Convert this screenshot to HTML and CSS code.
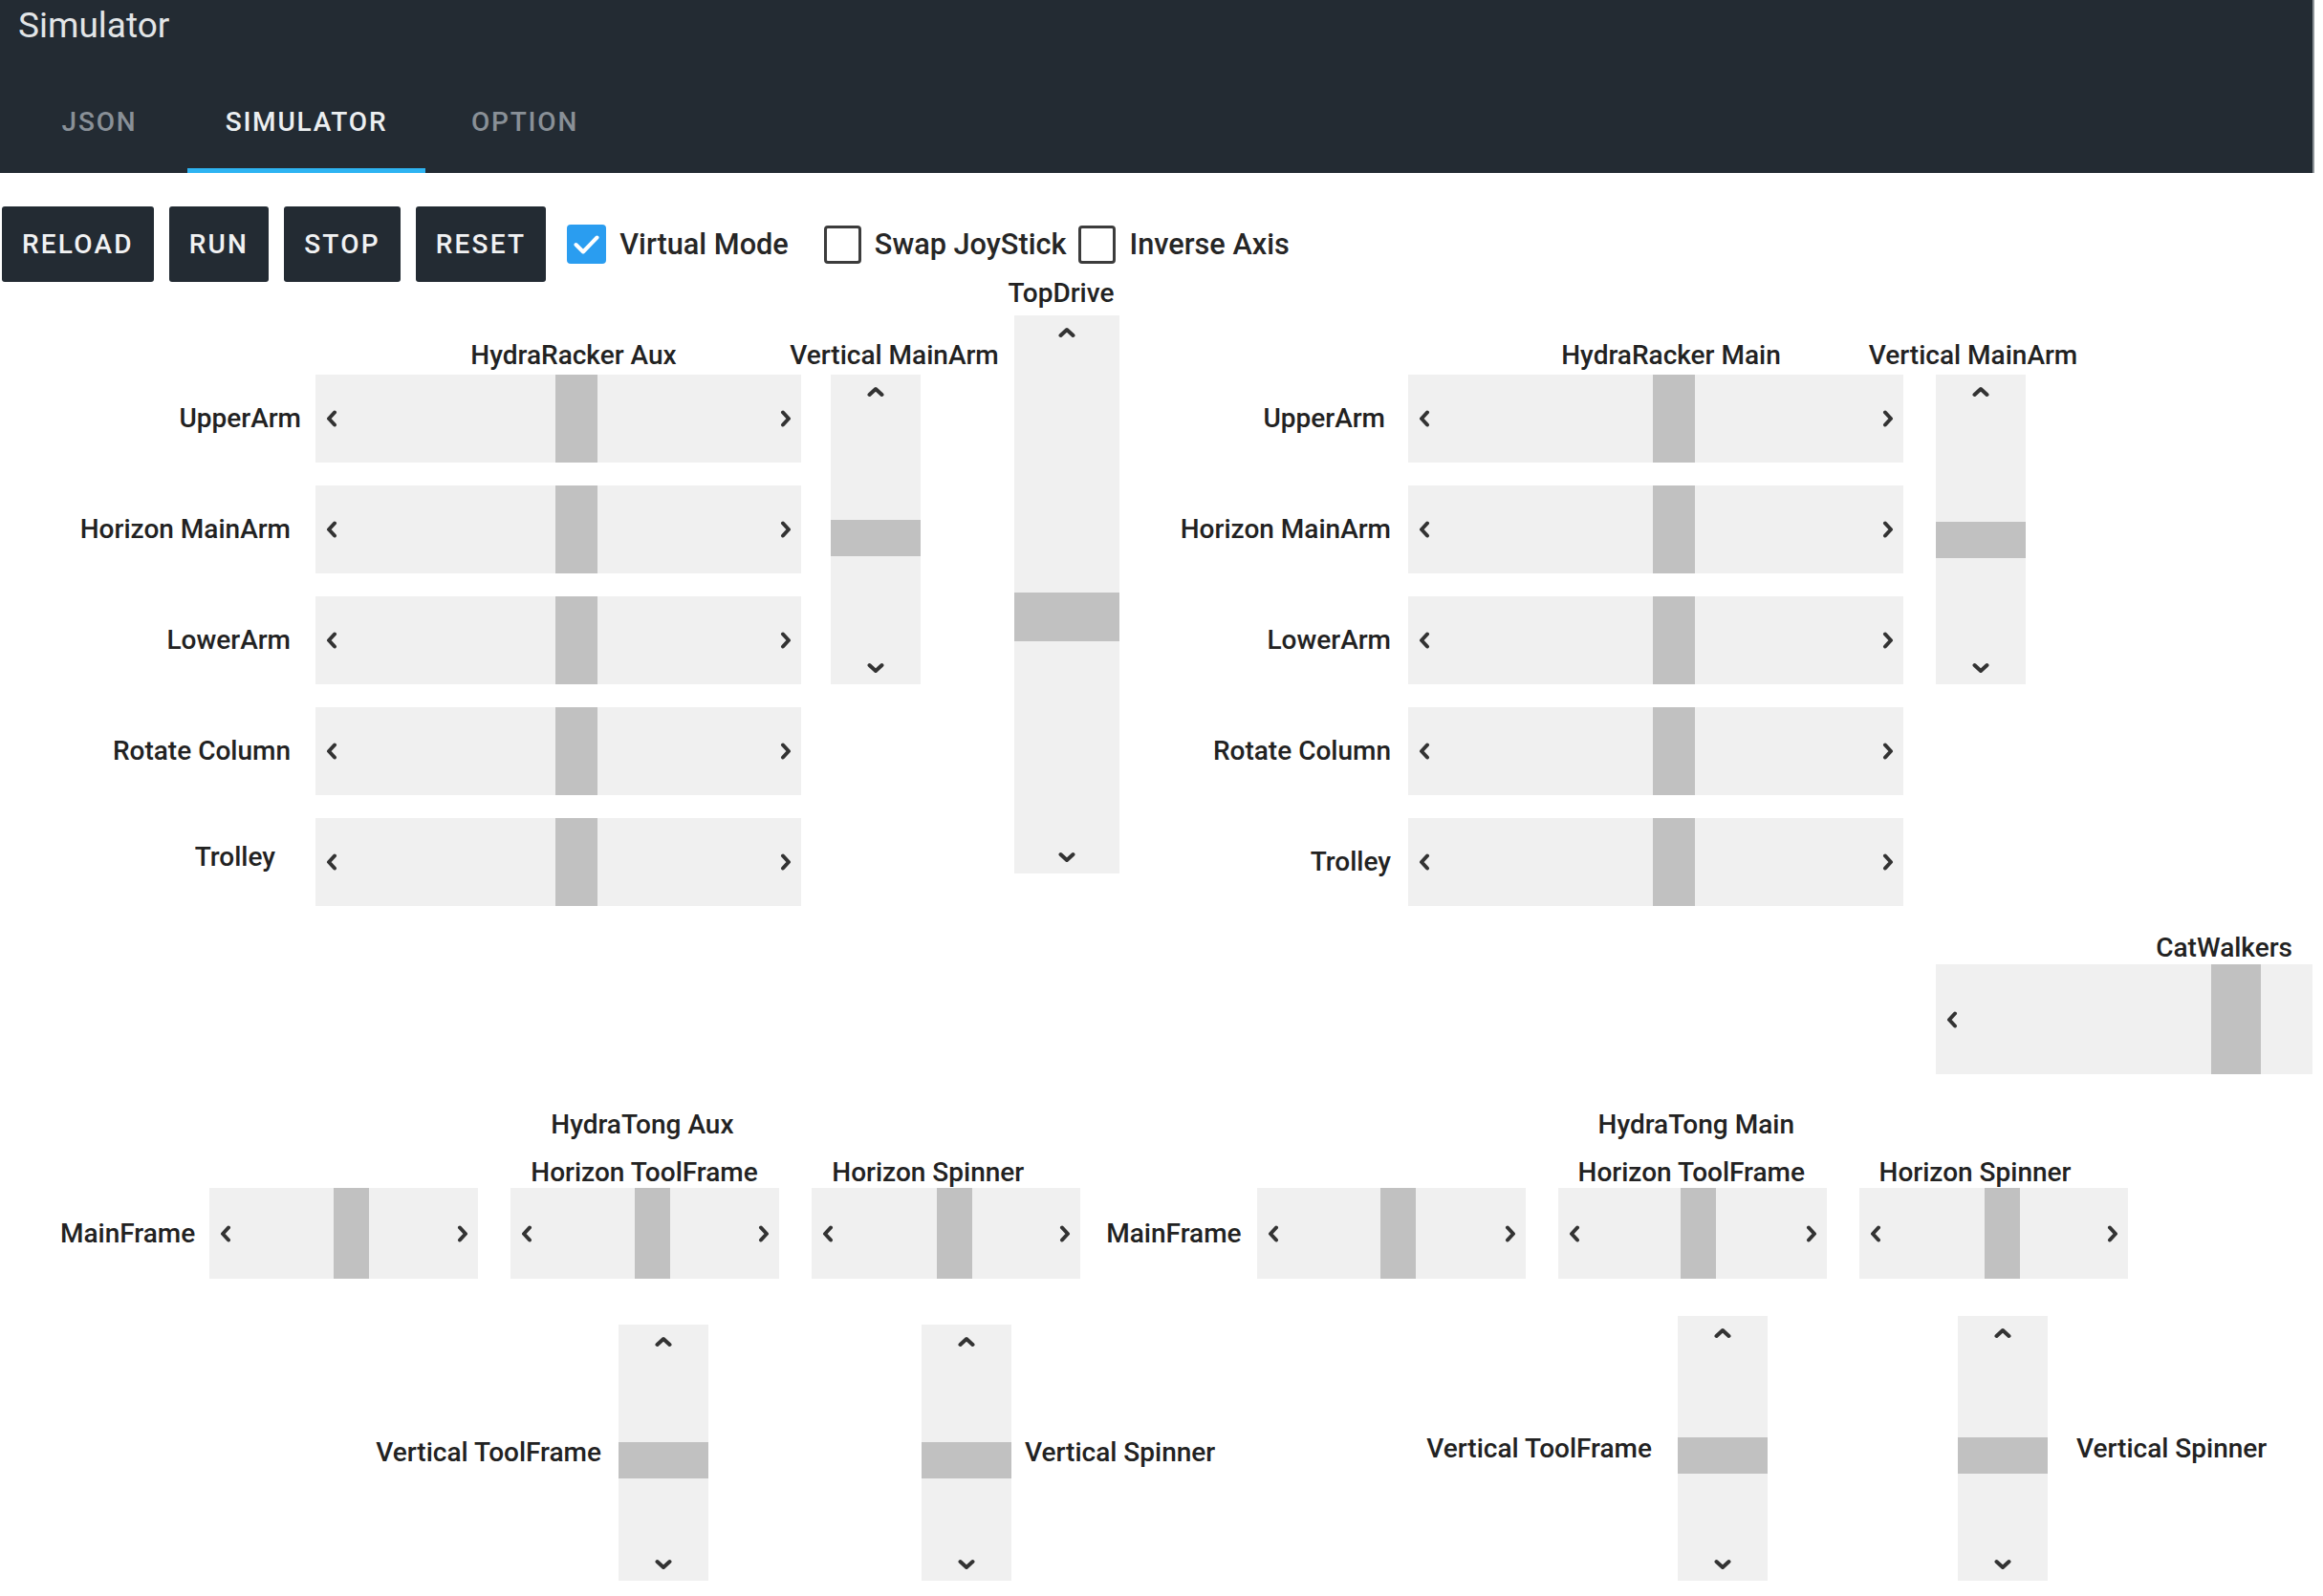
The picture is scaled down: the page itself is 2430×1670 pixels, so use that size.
FILE: index.html
```html
<!DOCTYPE html>
<html lang="en">
<head>
<meta charset="utf-8">
<title>Simulator</title>
<link rel="stylesheet" href="styles.css">
</head>
<body>
<svg class="sprite" width="0" height="0" aria-hidden="true">
  <defs>
    <symbol id="chev-left" viewBox="0 0 12 18"><path d="M9 2.5 L3 9 L9 15.5" fill="none" stroke="#333" stroke-width="4" stroke-linecap="round" stroke-linejoin="round"/></symbol>
    <symbol id="chev-right" viewBox="0 0 12 18"><path d="M3 2.5 L9 9 L3 15.5" fill="none" stroke="#333" stroke-width="4" stroke-linecap="round" stroke-linejoin="round"/></symbol>
    <symbol id="chev-up" viewBox="0 0 18 12"><path d="M2.5 9 L9 3 L15.5 9" fill="none" stroke="#333" stroke-width="4" stroke-linecap="round" stroke-linejoin="round"/></symbol>
    <symbol id="chev-down" viewBox="0 0 18 12"><path d="M2.5 3 L9 9 L15.5 3" fill="none" stroke="#333" stroke-width="4" stroke-linecap="round" stroke-linejoin="round"/></symbol>
  </defs>
</svg>
<div class="app">
  <header class="appbar">
    <div class="appbar-title">Simulator</div>
    <nav class="tabs">
      <div class="tab tab-json">JSON</div>
      <div class="tab tab-sim is-active">SIMULATOR</div>
      <div class="tab tab-opt">OPTION</div>
    </nav>
  </header>

  <main class="content">
    <div class="toolbar">
      <button class="btn">RELOAD</button>
      <button class="btn">RUN</button>
      <button class="btn">STOP</button>
      <button class="btn">RESET</button>
      <label class="check check-first">
        <span class="box is-checked"><svg width="41" height="41" viewBox="0 0 41 41"><path d="M9.5 21 L17 28.5 L31.5 13.5" fill="none" stroke="#fff" stroke-width="4" stroke-linecap="round" stroke-linejoin="round"/></svg></span>
        <span class="check-label">Virtual Mode</span>
      </label>
      <label class="check check-wide">
        <span class="box"></span>
        <span class="check-label">Swap JoyStick</span>
      </label>
      <label class="check">
        <span class="box"></span>
        <span class="check-label">Inverse Axis</span>
      </label>
    </div>

    <section class="racker-row">
      <div class="racker racker-aux">
        <div class="racker-heads">
          <div class="r-head r-head-h"><span>HydraRacker Aux</span></div>
          <div class="r-head r-head-v r-head-v-aux"><span>Vertical MainArm</span></div>
        </div>
        <div class="racker-body">
          <div class="vs vs-mainarm">
            <svg class="chev-v"><use href="#chev-up"/></svg>
            <div class="thumb-v" style="top:152px"></div>
            <svg class="chev-v"><use href="#chev-down"/></svg>
          </div>
          <div class="r-label r-label-upper">UpperArm</div>
          <div class="hs hs-lg"><svg class="chev-h"><use href="#chev-left"/></svg><div class="thumb-h thumb-lg" style="left:251px"></div><svg class="chev-h"><use href="#chev-right"/></svg></div>
          <div class="r-label">Horizon MainArm</div>
          <div class="hs hs-lg"><svg class="chev-h"><use href="#chev-left"/></svg><div class="thumb-h thumb-lg" style="left:251px"></div><svg class="chev-h"><use href="#chev-right"/></svg></div>
          <div class="r-label">LowerArm</div>
          <div class="hs hs-lg"><svg class="chev-h"><use href="#chev-left"/></svg><div class="thumb-h thumb-lg" style="left:251px"></div><svg class="chev-h"><use href="#chev-right"/></svg></div>
          <div class="r-label">Rotate Column</div>
          <div class="hs hs-lg"><svg class="chev-h"><use href="#chev-left"/></svg><div class="thumb-h thumb-lg" style="left:251px"></div><svg class="chev-h"><use href="#chev-right"/></svg></div>
          <div class="r-label r-label-trolley">Trolley</div>
          <div class="hs hs-lg"><svg class="chev-h"><use href="#chev-left"/></svg><div class="thumb-h thumb-lg" style="left:251px"></div><svg class="chev-h"><use href="#chev-right"/></svg></div>
        </div>
      </div>

      <div class="topdrive">
        <div class="topdrive-label">TopDrive</div>
        <div class="vs vs-topdrive">
          <svg class="chev-v"><use href="#chev-up"/></svg>
          <div class="thumb-v thumb-v-lg" style="top:290px"></div>
          <svg class="chev-v"><use href="#chev-down"/></svg>
        </div>
      </div>

      <div class="racker racker-main">
        <div class="racker-heads">
          <div class="r-head r-head-h"><span>HydraRacker Main</span></div>
          <div class="r-head r-head-v"><span>Vertical MainArm</span></div>
        </div>
        <div class="racker-body">
          <div class="vs vs-mainarm">
            <svg class="chev-v"><use href="#chev-up"/></svg>
            <div class="thumb-v" style="top:154px"></div>
            <svg class="chev-v"><use href="#chev-down"/></svg>
          </div>
          <div class="r-label r-label-upper">UpperArm</div>
          <div class="hs hs-lg"><svg class="chev-h"><use href="#chev-left"/></svg><div class="thumb-h thumb-lg" style="left:256px"></div><svg class="chev-h"><use href="#chev-right"/></svg></div>
          <div class="r-label">Horizon MainArm</div>
          <div class="hs hs-lg"><svg class="chev-h"><use href="#chev-left"/></svg><div class="thumb-h thumb-lg" style="left:256px"></div><svg class="chev-h"><use href="#chev-right"/></svg></div>
          <div class="r-label">LowerArm</div>
          <div class="hs hs-lg"><svg class="chev-h"><use href="#chev-left"/></svg><div class="thumb-h thumb-lg" style="left:256px"></div><svg class="chev-h"><use href="#chev-right"/></svg></div>
          <div class="r-label">Rotate Column</div>
          <div class="hs hs-lg"><svg class="chev-h"><use href="#chev-left"/></svg><div class="thumb-h thumb-lg" style="left:256px"></div><svg class="chev-h"><use href="#chev-right"/></svg></div>
          <div class="r-label">Trolley</div>
          <div class="hs hs-lg"><svg class="chev-h"><use href="#chev-left"/></svg><div class="thumb-h thumb-lg" style="left:256px"></div><svg class="chev-h"><use href="#chev-right"/></svg></div>
        </div>
      </div>
    </section>

    <section class="catwalk">
      <div class="catwalk-label">CatWalkers</div>
      <div class="hs hs-catwalk"><svg class="chev-h"><use href="#chev-left"/></svg><div class="thumb-h thumb-xl" style="left:288px"></div><svg class="chev-h"><use href="#chev-right"/></svg></div>
    </section>

    <section class="tong">
      <div class="tong-top">
        <div class="tong-pair">
          <div class="tong-pair-label">MainFrame</div>
          <div class="hs hs-sm"><svg class="chev-h"><use href="#chev-left"/></svg><div class="thumb-h thumb-sm" style="left:130px"></div><svg class="chev-h"><use href="#chev-right"/></svg></div>
        </div>
        <div class="tong-col">
          <div class="tong-title">HydraTong Aux</div>
          <div class="tong-sub">Horizon ToolFrame</div>
          <div class="hs hs-sm"><svg class="chev-h"><use href="#chev-left"/></svg><div class="thumb-h thumb-sm" style="left:130px"></div><svg class="chev-h"><use href="#chev-right"/></svg></div>
        </div>
        <div class="tong-col">
          <div class="tong-sub">Horizon Spinner</div>
          <div class="hs hs-sm"><svg class="chev-h"><use href="#chev-left"/></svg><div class="thumb-h thumb-sm" style="left:131px"></div><svg class="chev-h"><use href="#chev-right"/></svg></div>
        </div>
        <div class="tong-pair tong-pair-main">
          <div class="tong-pair-label">MainFrame</div>
          <div class="hs hs-sm"><svg class="chev-h"><use href="#chev-left"/></svg><div class="thumb-h thumb-sm" style="left:129px"></div><svg class="chev-h"><use href="#chev-right"/></svg></div>
        </div>
        <div class="tong-col">
          <div class="tong-title">HydraTong Main</div>
          <div class="tong-sub">Horizon ToolFrame</div>
          <div class="hs hs-sm"><svg class="chev-h"><use href="#chev-left"/></svg><div class="thumb-h thumb-sm" style="left:128px"></div><svg class="chev-h"><use href="#chev-right"/></svg></div>
        </div>
        <div class="tong-col">
          <div class="tong-sub">Horizon Spinner</div>
          <div class="hs hs-sm"><svg class="chev-h"><use href="#chev-left"/></svg><div class="thumb-h thumb-sm" style="left:131px"></div><svg class="chev-h"><use href="#chev-right"/></svg></div>
        </div>
      </div>

      <div class="tong-bottom">
        <div class="vg vg-1">
          <div class="vg-label vg-label-left">Vertical ToolFrame</div>
          <div class="vs vs-tool-aux">
            <svg class="chev-v"><use href="#chev-up"/></svg>
            <div class="thumb-v" style="top:123px"></div>
            <svg class="chev-v"><use href="#chev-down"/></svg>
          </div>
        </div>
        <div class="vg vg-2">
          <div class="vs vs-tool-aux">
            <svg class="chev-v"><use href="#chev-up"/></svg>
            <div class="thumb-v" style="top:123px"></div>
            <svg class="chev-v"><use href="#chev-down"/></svg>
          </div>
          <div class="vg-label vg-label-right">Vertical Spinner</div>
        </div>
        <div class="vg vg-3">
          <div class="vg-label vg-label-left vg-label-wide">Vertical ToolFrame</div>
          <div class="vs vs-tool-main">
            <svg class="chev-v"><use href="#chev-up"/></svg>
            <div class="thumb-v" style="top:127px"></div>
            <svg class="chev-v"><use href="#chev-down"/></svg>
          </div>
        </div>
        <div class="vg vg-4">
          <div class="vs vs-tool-main">
            <svg class="chev-v"><use href="#chev-up"/></svg>
            <div class="thumb-v" style="top:127px"></div>
            <svg class="chev-v"><use href="#chev-down"/></svg>
          </div>
          <div class="vg-label vg-label-right vg-label-far">Vertical Spinner</div>
        </div>
      </div>
    </section>
  </main>
</div>
</body>
</html>
```

FILE: styles.css
```css
* { box-sizing: border-box; }

html, body {
  margin: 0;
  padding: 0;
  background: #ffffff;
}

body {
  font-family: Roboto, "Liberation Sans", Arial, sans-serif;
  font-weight: 500;
  font-size: 28px;
  color: #222222;
}

.sprite { position: absolute; width: 0; height: 0; overflow: hidden; }

.app { width: 2421px; }

/* ---------- App bar ---------- */
.appbar {
  height: 181px;
  background: #232b33;
  border-right: 2px solid #8e9499;
}

.appbar-title {
  height: 73px;
  padding-left: 19px;
  font-family: Roboto, "Liberation Sans", sans-serif;
  font-weight: 400;
  font-size: 37px;
  line-height: 54px;
  color: #e2e5e7;
}

.tabs {
  display: flex;
  height: 108px;
  padding-left: 12px;
}

.tab {
  display: flex;
  align-items: center;
  justify-content: center;
  height: 100%;
  font-family: Roboto, "Liberation Sans", sans-serif;
  font-weight: 500;
  font-size: 28px;
  letter-spacing: 1.8px;
  color: #899097;
}

.tab-json { width: 184px; }
.tab-sim { width: 249px; }
.tab-opt { width: 208px; }

.tab.is-active {
  color: #eceff1;
  box-shadow: inset 0 -5px 0 #2eb4f2;
}

/* ---------- Content ---------- */
.content {
  width: 2419px;
  overflow: hidden;
  padding-bottom: 14px;
}

.toolbar {
  display: flex;
  align-items: center;
  height: 79px;
  margin-top: 35px;
  padding-left: 2px;
}

.btn {
  height: 79px;
  margin-right: 16px;
  padding: 0 21px;
  border: 0;
  border-radius: 3px;
  background: #232b33;
  color: #f1f2f3;
  font-family: Roboto, "Liberation Sans", sans-serif;
  font-weight: 500;
  font-size: 28px;
  letter-spacing: 2.2px;
}

.check {
  display: flex;
  align-items: center;
  margin-left: 13px;
}

.check-first { margin-left: 6px; }
.check-wide { margin-left: 37px; }

.box {
  display: block;
  width: 39px;
  height: 40px;
  border: 3px solid #3c3c3c;
  border-radius: 4px;
  background: #fff;
}

.box.is-checked {
  width: 41px;
  height: 41px;
  border: 0;
  background: #2a9df0;
}

.box svg { display: block; }

.check-label {
  margin-left: 14px;
  font-family: Roboto, "Liberation Sans", sans-serif;
  font-weight: 500;
  font-size: 30.7px;
  color: #262626;
}

/* ---------- Scrollbar-like sliders ---------- */
.hs {
  position: relative;
  display: flex;
  align-items: center;
  justify-content: space-between;
  padding: 0 10px 0 11px;
  background: #f0f0f0;
}

.vs {
  position: relative;
  display: flex;
  flex-direction: column;
  align-items: center;
  justify-content: space-between;
  padding: 12px 0 11px;
  width: 94px;
  background: #f0f0f0;
}

.chev-h { display: block; width: 12px; height: 18px; }
.chev-v { display: block; width: 18px; height: 12px; }

.thumb-h {
  position: absolute;
  top: 0;
  bottom: 0;
  width: 44px;
  background: #c1c1c1;
}

.thumb-sm { width: 37px; }
.thumb-xl { width: 52px; }

.thumb-v {
  position: absolute;
  left: 0;
  right: 0;
  height: 38px;
  background: #c1c1c1;
}

.thumb-v-lg { height: 51px; }

/* ---------- Racker groups ---------- */
.racker-row {
  display: flex;
  align-items: flex-start;
}

.racker { margin-top: 63px; }

.racker-heads,
.racker-body { display: grid; }

.racker-aux .racker-heads,
.racker-aux .racker-body {
  grid-template-columns: 315px 508px 110px;
  column-gap: 15px;
}

.racker-main { margin-left: 59px; }

.racker-main .racker-heads,
.racker-main .racker-body {
  grid-template-columns: 225px 518px 110px;
  column-gap: 18px;
}

.racker-heads {
  height: 28px;
  margin-bottom: 6px;
}

.r-head {
  display: flex;
  justify-content: center;
  line-height: 28px;
  white-space: nowrap;
}

.r-head-h { grid-column: 2; padding-left: 32px; }
.r-head-v { grid-column: 3; }
.r-head-v-aux { padding-left: 55px; }

.racker-body {
  grid-template-rows: repeat(5, 92px);
  row-gap: 24px;
}

.r-label {
  grid-column: 1;
  align-self: center;
  justify-self: end;
  white-space: nowrap;
  line-height: 32px;
}

.racker-aux .r-label { padding-right: 11px; }
.racker-aux .r-label-upper { padding-right: 0; }
.racker-aux .r-label-trolley { padding-right: 27px; margin-top: -10px; }
.racker-main .r-label-upper { padding-right: 6px; }

.hs-lg { grid-column: 2; }

.vs-mainarm {
  grid-column: 3;
  grid-row: 1 / span 3;
  justify-self: end;
}

.topdrive {
  display: flex;
  flex-direction: column;
  align-items: center;
  width: 110px;
  margin-left: 98px;
}

.topdrive-label {
  margin-right: 12px;
  margin-bottom: 11px;
  line-height: 24px;
  white-space: nowrap;
}

.vs-topdrive {
  width: 110px;
  height: 584px;
}

/* ---------- CatWalkers ---------- */
.catwalk {
  width: 394px;
  margin: 30px 0 0 2025px;
}

.catwalk-label {
  padding-right: 21px;
  margin-bottom: 3px;
  text-align: right;
  line-height: 28px;
}

.hs-catwalk {
  width: 440px;
  height: 115px;
}

/* ---------- HydraTong ---------- */
.tong { margin-top: 39px; }

.tong-top {
  display: flex;
  align-items: flex-end;
  padding-left: 63px;
}

.tong-pair {
  display: flex;
  align-items: center;
}

.tong-pair-label {
  margin-right: 15px;
  white-space: nowrap;
}

.tong-pair-main { margin-left: 27px; }
.tong-pair-main .tong-pair-label { margin-right: 16px; }

.tong-col { margin-left: 34px; }

.tong-title {
  padding-left: 42px;
  margin-bottom: 22px;
  line-height: 28px;
  white-space: nowrap;
}

.tong-sub {
  padding-left: 21px;
  margin-bottom: 2px;
  line-height: 28px;
  white-space: nowrap;
}

.hs-sm {
  width: 281px;
  height: 95px;
}

.tong-bottom {
  display: flex;
  align-items: flex-end;
  margin-top: 39px;
}

.vg {
  display: flex;
  align-items: center;
}

.vg-1 { margin-left: 390px; }
.vg-2 { margin-left: 223px; }
.vg-3 { margin-left: 219px; }
.vg-4 { margin-left: 199px; }

.vg-label {
  white-space: nowrap;
  line-height: 32px;
}

.vg-label-left {
  width: 257px;
  padding-right: 18px;
  text-align: right;
}

.vg-label-wide {
  width: 264px;
  padding-right: 27px;
}

.vg-label-right {
  width: 214px;
  padding-left: 14px;
}

.vg-label-far {
  width: 240px;
  padding-left: 30px;
}

.vs-tool-aux { height: 268px; }
.vs-tool-main { height: 277px; }
```
